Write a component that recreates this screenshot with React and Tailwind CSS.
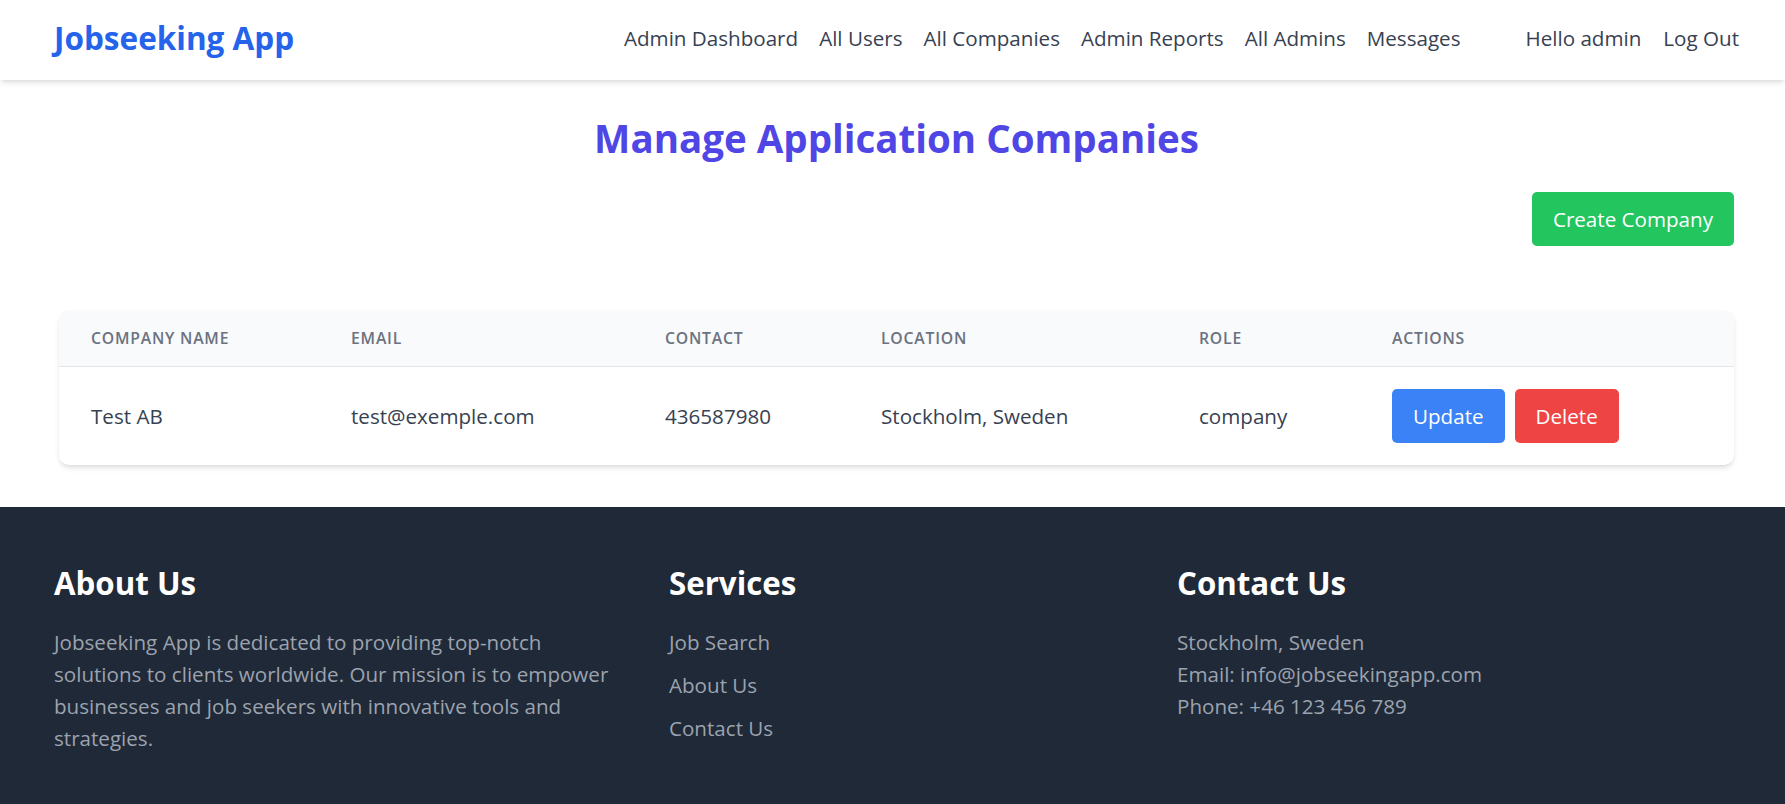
import React from "react";

const navLinks = ["Admin Dashboard", "All Users", "All Companies", "Admin Reports", "All Admins", "Messages"];

const companies = [
  {
    name: "Test AB",
    email: "test@exemple.com",
    contact: "436587980",
    location: "Stockholm, Sweden",
    role: "company",
  },
];

const columns = [
  { label: "Company Name", w: "w-[260px]" },
  { label: "Email", w: "w-[314px]" },
  { label: "Contact", w: "w-[216px]" },
  { label: "Location", w: "w-[318px]" },
  { label: "Role", w: "w-[193px]" },
  { label: "Actions", w: "w-auto" },
];

const App = () => {
  return (
    <div className="min-h-screen bg-white font-['Open_Sans',sans-serif]">
      {/* Navbar */}
      <header className="relative z-10 h-[80px] bg-white shadow-md pl-[54px] pr-[46px] pb-[4px] flex items-center justify-between">
        <a className="text-[31.5px] font-bold text-[#2563eb] leading-[40px]">Jobseeking App</a>
        <div className="flex items-center">
          <nav className="flex items-center gap-[21px]">
            {navLinks.map((l) => (
              <a key={l} className="text-[20.6px] leading-[30px] text-[#374151]">
                {l}
              </a>
            ))}
          </nav>
          <div className="flex items-center gap-[22px] ml-[65px]">
            <span className="text-[20.6px] leading-[30px] text-[#374151]">Hello admin</span>
            <button className="text-[20.6px] leading-[30px] text-[#374151]">Log Out</button>
          </div>
        </div>
      </header>

      {/* Main */}
      <main className="pl-[59px] pr-[51px] pt-[36px] pb-[42px]">
        <h1 className="text-center text-[38.5px] leading-[45px] font-bold text-[#4f46e5] mb-[31px]">
          Manage Application Companies
        </h1>

        <div className="flex justify-end mb-[64px]">
          <button className="h-[54px] px-[21px] rounded-[5px] bg-[#22c55e] text-white text-[20.6px]">
            Create Company
          </button>
        </div>

        <div className="rounded-[10px] shadow-md overflow-hidden bg-white">
          <table className="w-full table-fixed border-collapse">
            <thead className="bg-[#f9fafb]">
              <tr className="border-b border-[#e5e7eb]">
                {columns.map((c) => (
                  <th
                    key={c.label}
                    className={`${c.w} text-left px-[32px] py-[18px] text-[15.75px] leading-[20px] font-semibold uppercase tracking-wider text-[#6b7280]`}
                  >
                    {c.label}
                  </th>
                ))}
              </tr>
            </thead>
            <tbody>
              {companies.map((co) => (
                <tr key={co.email}>
                  <td className="px-[32px] py-[22px] text-[20.6px] text-[#374151]">{co.name}</td>
                  <td className="px-[32px] py-[22px] text-[20.6px] text-[#374151]">{co.email}</td>
                  <td className="px-[32px] py-[22px] text-[20.6px] text-[#374151]">{co.contact}</td>
                  <td className="px-[32px] py-[22px] text-[20.6px] text-[#374151]">{co.location}</td>
                  <td className="px-[32px] py-[22px] text-[20.6px] text-[#374151]">{co.role}</td>
                  <td className="px-[32px] py-[22px]">
                    <div className="flex gap-[10px]">
                      <button className="h-[54px] px-[21px] rounded-[5px] bg-[#3b82f6] text-white text-[20.6px]">
                        Update
                      </button>
                      <button className="h-[54px] px-[21px] rounded-[5px] bg-[#ef4444] text-white text-[20.6px]">
                        Delete
                      </button>
                    </div>
                  </td>
                </tr>
              ))}
            </tbody>
          </table>
        </div>
      </main>

      {/* Footer */}
      <footer className="bg-[#1f2937] pt-[56px] pb-[80px] pl-[54px] pr-[48px]">
        <div className="grid grid-cols-[615px_508px_1fr]">
          <div>
            <h3 className="text-[31.25px] leading-[40px] font-bold text-white mb-[23px]">About Us</h3>
            <p className="max-w-[560px] text-[20.6px] leading-[32px] text-[#9ca3af]">
              Jobseeking App is dedicated to providing top-notch solutions to clients worldwide. Our
              mission is to empower businesses and job seekers with innovative tools and strategies.
            </p>
          </div>
          <div>
            <h3 className="text-[31.25px] leading-[40px] font-bold text-white mb-[23px]">Services</h3>
            <ul className="flex flex-col gap-[11px] text-[20.6px] leading-[32px] text-[#9ca3af]">
              <li>Job Search</li>
              <li>About Us</li>
              <li>Contact Us</li>
            </ul>
          </div>
          <div>
            <h3 className="text-[31.25px] leading-[40px] font-bold text-white mb-[23px]">Contact Us</h3>
            <div className="text-[20.6px] leading-[32px] text-[#9ca3af]">
              <p>Stockholm, Sweden</p>
              <p>Email: info@jobseekingapp.com</p>
              <p>Phone: +46 123 456 789</p>
            </div>
          </div>
        </div>
      </footer>
    </div>
  );
};

export default App;
